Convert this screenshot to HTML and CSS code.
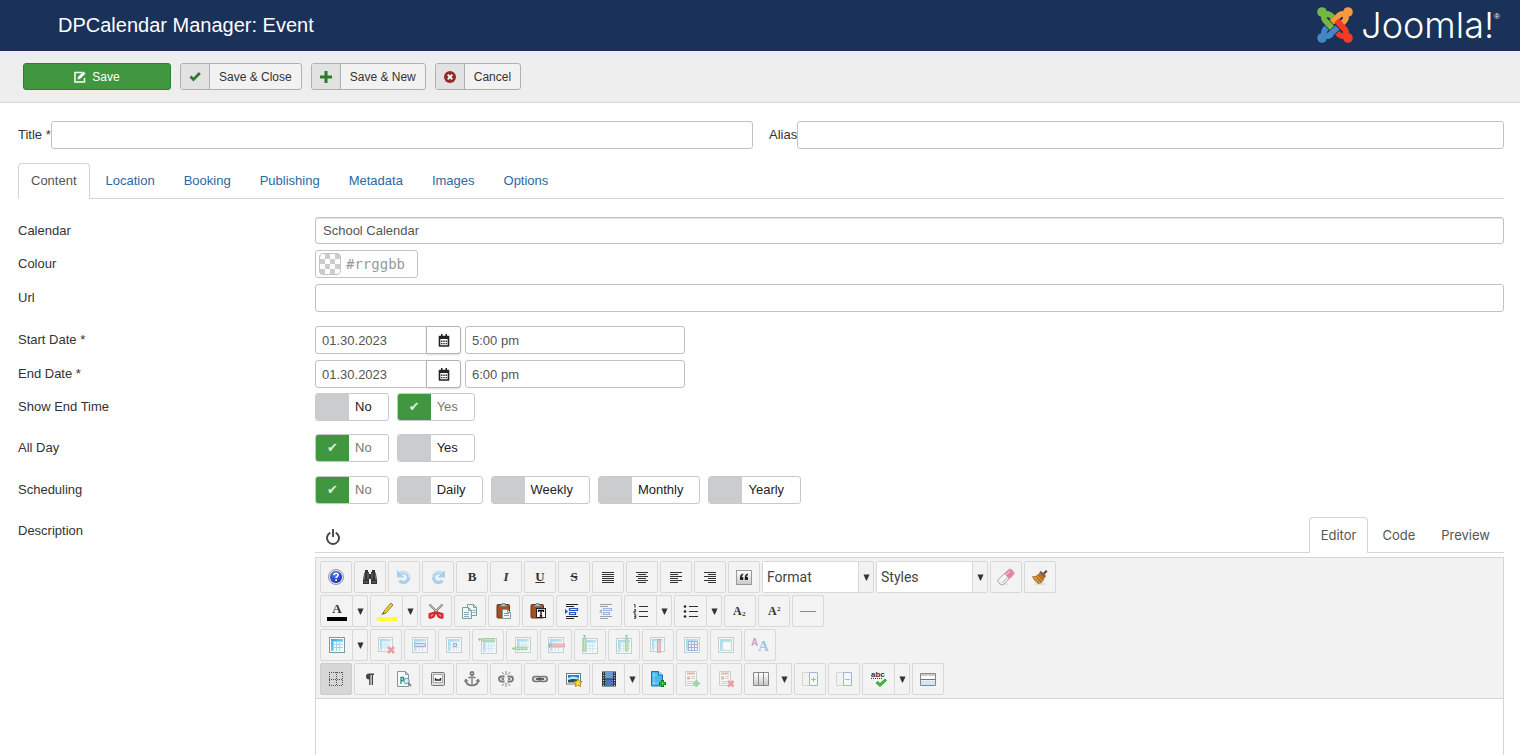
FILE: index.html
```html
<!DOCTYPE html>
<html lang="en">
<head>
<meta charset="utf-8">
<title>DPCalendar Manager: Event</title>
<link rel="stylesheet" href="styles.css">
</head>
<body>
<svg class="defs" aria-hidden="true">
  <defs>
    <linearGradient id="gblue" x1="0" y1="0" x2="1" y2="1"><stop offset="0" stop-color="#17b0ea"/><stop offset="1" stop-color="#b9e6f8"/></linearGradient>
    <linearGradient id="ggrey" x1="0" y1="0" x2="0" y2="1"><stop offset="0" stop-color="#fff"/><stop offset="1" stop-color="#c8c8c8"/></linearGradient>
    <radialGradient id="ghelp" cx=".4" cy=".3" r=".8"><stop offset="0" stop-color="#4f7cf0"/><stop offset="1" stop-color="#0a2bb0"/></radialGradient>
  </defs>
  <symbol id="table" viewBox="0 0 16 16"><rect x=".5" y=".5" width="15" height="15" fill="#fff" stroke="#7f9a9c"/><path d="M2 2h12v2.500H4.500V14H2z" fill="url(#gblue)"/><path d="M4.500 4.500H14V14H4.500z" fill="#f2fbfe"/><path d="M2 4.500h12M4.500 7.500H14M4.500 10.500H14M4.500 4.500V14M7.500 4.500V14M10.500 4.500V14" stroke="#8fcfe4" stroke-width=".8"/></symbol>
  <symbol id="caret" viewBox="0 0 8 8"><path d="M.5.500h7L4.400 7.500h-.8z" fill="#333"/></symbol>
  <symbol id="calendar" viewBox="0 0 12 13"><path d="M1.500 2.500h9v9.500h-9z" fill="#fff" stroke="#222" stroke-width="1.600" stroke-linejoin="round"/><path d="M1 2h10v3H1zM3 0h1.500v3H3zM7.500 0H9v3H7.500z" fill="#222"/><path d="M3 6.500h1.500V8H3zM5.300 6.500h1.500V8H5.300zM7.600 6.500h1.500V8H7.600zM3 9h1.500v1.200H3zM5.300 9h1.500v1.200H5.300zM7.600 9h1.500v1.200H7.600z" fill="#333"/></symbol>
  <symbol id="arm" viewBox="0 0 36 36"><path d="M16 10.500Q11.500 5 8.200 8.200Q5 11.500 10 15.500L16.500 22.500" fill="none" stroke="currentColor" stroke-width="5.800"/><circle cx="5" cy="5" r="4.800" fill="currentColor"/></symbol>
  <symbol id="gap" viewBox="0 0 36 36"><path d="M10 15.500L16.500 22.500" fill="none" stroke="#1a3159" stroke-width="7.200"/></symbol>
</svg>

<header class="header">
  <h1 class="header__title">DPCalendar Manager: Event</h1>
  <div class="logo">
    <svg class="logo__mark" viewBox="0 0 36 36" aria-hidden="true">
      <g color="#4586c5" transform="rotate(-90 18 18)"><use href="#arm"/></g>
      <g color="#f33a25" transform="rotate(180 18 18)"><use href="#gap"/><use href="#arm"/></g>
      <g color="#f89940" transform="rotate(90 18 18)"><use href="#gap"/><use href="#arm"/></g>
      <g color="#74b743"><use href="#gap"/><use href="#arm"/></g>
      <path d="M14 27L21.500 19.500" fill="none" stroke="#1a3159" stroke-width="7.200"/>
      <path d="M12.500 28L20.500 20.500" fill="none" stroke="#4586c5" stroke-width="5.800"/>
      <path d="M19.500 13.500L26.500 21" fill="none" stroke="#f33a25" stroke-width="5.800"/>
    </svg>
    <span class="logo__text">Joomla!</span><span class="logo__reg">®</span>
  </div>
</header>

<div class="actions">
  <button class="btn btn--save" type="button"><svg width="12" height="12" viewBox="0 0 12 12" aria-hidden="true"><path d="M8 1.500H1v9.500h9.500V7" fill="none" stroke="#fff" stroke-width="1.500"/><path d="M3.500 8.500L4 6 9.500.5l2 2L6 8z" fill="#fff"/></svg>Save</button>
  <button class="btn" type="button"><span class="btn__icon"><svg width="12" height="12" viewBox="0 0 12 12" aria-hidden="true"><path d="M.5 6.500L2.300 4.500 4.500 6.500 9.800 1 11.800 3 4.500 10.500z" fill="#2b7a2d"/></svg></span><span class="btn__text">Save &amp; Close</span></button>
  <button class="btn" type="button"><span class="btn__icon"><svg width="12" height="12" viewBox="0 0 12 12" aria-hidden="true"><path d="M4.500 0h3v4.500H12v3H7.500V12h-3V7.500H0v-3h4.500z" fill="#2b7a2d"/></svg></span><span class="btn__text">Save &amp; New</span></button>
  <button class="btn" type="button"><span class="btn__icon"><svg width="12" height="12" viewBox="0 0 12 12" aria-hidden="true"><circle cx="6" cy="6" r="6" fill="#942a25"/><path d="M3.700 3.700l4.600 4.600M8.300 3.700L3.700 8.300" stroke="#fff" stroke-width="1.900"/></svg></span><span class="btn__text">Cancel</span></button>
</div>

<main class="main">
  <div class="titles">
    <div class="titles__item"><label for="title">Title *</label><input class="field" id="title" type="text"></div>
    <div class="titles__item"><label for="alias">Alias</label><input class="field" id="alias" type="text"></div>
  </div>

  <nav class="tabs">
    <a class="tabs__link tabs__link--active" href="#content">Content</a>
    <a class="tabs__link" href="#location">Location</a>
    <a class="tabs__link" href="#booking">Booking</a>
    <a class="tabs__link" href="#publishing">Publishing</a>
    <a class="tabs__link" href="#metadata">Metadata</a>
    <a class="tabs__link" href="#images">Images</a>
    <a class="tabs__link" href="#options">Options</a>
  </nav>

  <div class="row"><label class="row__label" for="calendar-sel">Calendar</label><select class="field field--select" id="calendar-sel"><option>School Calendar</option></select></div>
  <div class="row"><label class="row__label" for="colour">Colour</label><div class="colour"><span class="colour__swatch"></span><input class="colour__input" id="colour" type="text" placeholder="#rrggbb"></div></div>
  <div class="row row--url"><label class="row__label" for="url">Url</label><input class="field" id="url" type="text"></div>
  <div class="row"><label class="row__label" for="start">Start Date *</label><div class="when"><div class="date"><input class="field date__input" id="start" type="text" value="01.30.2023"><button class="date__btn" type="button" aria-label="Pick start date"><svg width="12" height="13"><use href="#calendar"/></svg></button></div><input class="field when__time" type="text" value="5:00 pm" aria-label="Start time"></div></div>
  <div class="row row--end"><label class="row__label" for="end">End Date *</label><div class="when"><div class="date"><input class="field date__input" id="end" type="text" value="01.30.2023"><button class="date__btn" type="button" aria-label="Pick end date"><svg width="12" height="13"><use href="#calendar"/></svg></button></div><input class="field when__time" type="text" value="6:00 pm" aria-label="End time"></div></div>
  <div class="row row--loose"><span class="row__label">Show End Time</span><div class="toggles">
    <label class="toggle"><input type="radio" name="showend"><span>No</span></label>
    <label class="toggle"><input type="radio" name="showend" checked><span>Yes</span></label></div></div>
  <div class="row row--url"><span class="row__label">All Day</span><div class="toggles">
    <label class="toggle"><input type="radio" name="allday" checked><span>No</span></label>
    <label class="toggle"><input type="radio" name="allday"><span>Yes</span></label></div></div>
  <div class="row row--loose"><span class="row__label">Scheduling</span><div class="toggles">
    <label class="toggle"><input type="radio" name="sched" checked><span>No</span></label>
    <label class="toggle"><input type="radio" name="sched"><span>Daily</span></label>
    <label class="toggle"><input type="radio" name="sched"><span>Weekly</span></label>
    <label class="toggle"><input type="radio" name="sched"><span>Monthly</span></label>
    <label class="toggle"><input type="radio" name="sched"><span>Yearly</span></label></div></div>

  <div class="row row--editor"><span class="row__label">Description</span>
    <div class="editor">
      <div class="editor__head">
        <button class="power" type="button" aria-label="Toggle editor"><svg width="14" height="16" viewBox="0 0 14 16"><path d="M4.300 3.600a6 6 0 1 0 5.400 0" fill="none" stroke="#444" stroke-width="1.900"/><path d="M7 0v8" stroke="#444" stroke-width="1.900"/></svg></button>
        <nav class="modes"><a class="modes__link modes__link--active" href="#editor">Editor</a><a class="modes__link" href="#code">Code</a><a class="modes__link" href="#preview">Preview</a></nav>
      </div>
      <div class="editor__box">
        <div class="bars">
          <div class="bar">
            <button class="tool" type="button" aria-label="Help"><svg viewBox="0 0 16 16"><circle cx="8" cy="8" r="7.500" fill="#e4e4e4" stroke="#999"/><circle cx="8" cy="8" r="6" fill="url(#ghelp)"/><path d="M5.900 6.200q.2-2 2.200-2 2 0 2 1.800 0 1-1.100 1.700-.9.500-.9 1.300M8.100 10.300v1.700" fill="none" stroke="#fff" stroke-width="1.600"/></svg></button>
            <button class="tool" type="button" aria-label="Find"><svg viewBox="0 0 16 16"><path d="M3 1h3v2h1v2h2V3h1V1h3v2l1 2 1 6v4H9v-5H7v5H1v-4l1-6 1-2z" fill="#333"/><path d="M3 5l-1 6M6 4v6M10 4v6M13 5l1 6M2 13h4M10 13h4" stroke="#888" stroke-width=".8"/></svg></button>
            <button class="tool tool--off" type="button" aria-label="Undo"><svg viewBox="0 0 16 16"><path d="M3.500 5.500A5 5 0 1 1 3.500 11.500" fill="none" stroke="#3b9ae0" stroke-width="3.400"/><path d="M1 1v7.500h7.500z" fill="#3b9ae0"/><path d="M4.500 4.500A5 5 0 0 1 13 8.500" fill="none" stroke="#bfe2fb" stroke-width="1.200"/></svg></button>
            <button class="tool tool--off" type="button" aria-label="Redo"><svg viewBox="0 0 16 16"><path d="M12.500 5.500A5 5 0 1 0 12.500 11.500" fill="none" stroke="#3b9ae0" stroke-width="3.400"/><path d="M15 1v7.500H7.500z" fill="#3b9ae0"/><path d="M11.500 4.500A5 5 0 0 0 3 8.500" fill="none" stroke="#bfe2fb" stroke-width="1.200"/></svg></button>
            <button class="tool tool--text" type="button"><b>B</b></button>
            <button class="tool tool--text" type="button"><i>I</i></button>
            <button class="tool tool--text" type="button"><u>U</u></button>
            <button class="tool tool--text" type="button"><s>S</s></button>
            <button class="tool" type="button" aria-label="Justify"><svg viewBox="0 0 16 16"><path d="M2 3.500h12M2 5.500h12M2 7.500h12M2 9.500h12M2 11.500h12M2 13.500h12" stroke="#333"/></svg></button>
            <button class="tool" type="button" aria-label="Align center"><svg viewBox="0 0 16 16"><path d="M2 3.500h12M4 5.500h8M2 7.500h12M4 9.500h8M2 11.500h12M4 13.500h8" stroke="#333"/></svg></button>
            <button class="tool" type="button" aria-label="Align left"><svg viewBox="0 0 16 16"><path d="M2 3.500h12M2 5.500h8M2 7.500h12M2 9.500h8M2 11.500h12M2 13.500h8" stroke="#333"/></svg></button>
            <button class="tool" type="button" aria-label="Align right"><svg viewBox="0 0 16 16"><path d="M2 3.500h12M6 5.500h8M2 7.500h12M6 9.500h8M2 11.500h12M6 13.500h8" stroke="#333"/></svg></button>
            <button class="tool" type="button" aria-label="Quote"><svg viewBox="0 0 16 16"><rect x=".5" y="1.500" width="15" height="14" fill="url(#ggrey)" stroke="#999"/><path d="M7.200 4.500Q4 5 4 8.500V11h3.200V8H5.700Q5.700 6.300 7.200 6zM12 4.500Q8.800 5 8.800 8.500V11H12V8h-1.500q0-1.700 1.500-2z" fill="#222"/></svg></button>
            <div class="combo"><select aria-label="Format"><option>Format</option></select><span class="combo__arrow"><svg class="caret"><use href="#caret"/></svg></span></div>
            <div class="combo"><select aria-label="Styles"><option>Styles</option></select><span class="combo__arrow"><svg class="caret"><use href="#caret"/></svg></span></div>
            <button class="tool" type="button" aria-label="Remove formatting"><svg viewBox="0 0 16 16"><path d="M1 15h9" stroke="#ccc"/><g transform="rotate(-43 8 8)"><rect x="-1" y="4.500" width="18" height="7" rx="2" fill="#f4f4f4" stroke="#888" stroke-width=".7"/><path d="M9 4.700h5.500q2.200 0 2.200 2v2.500q0 2.100-2.200 2.100H9z" fill="#e8839a"/><path d="M9 6.500h6" stroke="#f9c6d0"/><path d="M1 9.500h8" stroke="#c4c4c4"/></g></svg></button>
            <button class="tool" type="button" aria-label="Clean up"><svg viewBox="0 0 16 16"><path d="M3 15h10" stroke="#ccc"/><path d="M11 4l3-3 1.500 1.500-3 3z" fill="#7b3b20"/><path d="M0 7q5 1 8-4l5 5q-2 6-6 7-5-2-7-8z" fill="#b97428"/><path d="M7.500 3l1.500-1 5 5-1 1.500z" fill="#557"/><path d="M3 8l5 6M5 7l5 5M2 8l3 5" stroke="#eeb45e" stroke-width=".8"/></svg></button>
          </div>
          <div class="bar">
            <div class="split"><button class="tool" type="button" aria-label="Text colour"><svg class="wide" viewBox="0 0 20 20"><text x="10" y="12" text-anchor="middle" class="glyph">A</text><path d="M0 16h20v4H0z" fill="#000"/></svg></button><button class="drop" type="button" aria-label="Text colours"><svg class="caret"><use href="#caret"/></svg></button></div>
            <div class="split"><button class="tool" type="button" aria-label="Highlight"><svg class="wide" viewBox="0 0 20 20"><path d="M14 2l2 2-7 8-3 1 1-3z" fill="#f2cf23" stroke="#6a5d16" stroke-width=".7"/><path d="M4 14l4-1.500-1.500-1.500z" fill="#555"/><path d="M0 16h20v4H0z" fill="#ff3"/></svg></button><button class="drop" type="button" aria-label="Highlight colours"><svg class="caret"><use href="#caret"/></svg></button></div>
            <button class="tool" type="button" aria-label="Cut"><svg viewBox="0 0 16 16"><path d="M1.500 1.500L11 11M14.500 1.500L5 11" stroke="#777" stroke-width="2"/><path d="M1.500 1.500L10 10M14.500 1.500L6 10" stroke="#ddd" stroke-width=".8"/><path d="M7 9.500L1.500 11v3.500q4 1 5.500-4zM9 9.500l5.500 1.500v3.500q-4 1-5.500-4z" fill="#ee8080" stroke="#d3262c" stroke-width="2"/></svg></button>
            <button class="tool" type="button" aria-label="Copy"><svg viewBox="0 0 16 16"><g fill="#eef6f5" stroke="#7b9c9a"><path d="M5.500 1.500h6l3 3v8h-9z"/><path d="M.5 4.500h6l3 3v8h-9z"/></g><path d="M6.500 4.500v3h3M11.500 1.500v3h3" fill="none" stroke="#7b9c9a"/><path d="M2 9.500h5M2 11.500h5M2 13.500h5M10.500 7.500h3M10.500 9.500h3" stroke="#8ab"/></svg></button>
            <button class="tool" type="button" aria-label="Paste"><svg viewBox="0 0 16 16"><rect x="1" y="1.500" width="12.500" height="13.500" rx="1" fill="#a55222" stroke="#6c3213"/><path d="M4 3.500V2h2V.5h3V2h2v1.500z" fill="#bbb" stroke="#666" stroke-width=".6"/><path d="M6.500 6.500h5l3 3v6h-8z" fill="#f2f8f7" stroke="#7b9c9a"/><path d="M8 10.500h5M8 12.500h5M11.500 6.500v3h3" stroke="#7b9fa0" fill="none"/></svg></button>
            <button class="tool" type="button" aria-label="Paste as text"><svg viewBox="0 0 16 16"><rect x="1" y="1.500" width="12.500" height="13.500" rx="1" fill="#a55222" stroke="#6c3213"/><path d="M4 3.500V2h2V.5h3V2h2v1.500z" fill="#bbb" stroke="#666" stroke-width=".6"/><rect x="6.500" y="5.500" width="9" height="9" fill="#fff" stroke="#222"/><path d="M8.500 9V7.500h5V9M11 7.500v6M9.800 13h2.400" fill="none" stroke="#000" stroke-width="1.300"/></svg></button>
            <button class="tool" type="button" aria-label="Indent"><svg viewBox="0 0 16 16"><path d="M2 1.500h12M2 3.500h8M2 13.500h12M2 15.500h8" stroke="#222"/><path d="M5.500 5.500h8v2h-8zM5.500 9.500h6v2h-6z" fill="#dfe9ff" stroke="#2352c9" stroke-width="1.200"/><path d="M1 6v5l3-2.500z" fill="#2352c9"/></svg></button>
            <button class="tool tool--off" type="button" aria-label="Outdent"><svg viewBox="0 0 16 16"><path d="M2 1.500h12M2 3.500h8M2 13.500h12M2 15.500h8" stroke="#222"/><path d="M5.500 5.500h8v2h-8zM5.500 9.500h6v2h-6z" fill="#dfe9ff" stroke="#2352c9" stroke-width="1.200"/><path d="M4 6v5L1 8.500z" fill="#2352c9"/></svg></button>
            <div class="split"><button class="tool" type="button" aria-label="Numbered list"><svg viewBox="0 0 16 16"><path d="M6 3.500h9M6 8.500h9M6 13.500h9" stroke="#333"/><path d="M1 2l1-.7v3.400M1 6.700h1.600v1.600H1V10h2M1 11.700h1.700v3.600H1M1.200 13.500h1.500" fill="none" stroke="#222" stroke-width=".9"/></svg></button><button class="drop" type="button" aria-label="Numbered list styles"><svg class="caret"><use href="#caret"/></svg></button></div>
            <div class="split"><button class="tool" type="button" aria-label="Bullet list"><svg viewBox="0 0 16 16"><path d="M6 3.500h9M6 8.500h9M6 13.500h9" stroke="#333"/><g fill="#222"><circle cx="2" cy="3.500" r="1.300"/><circle cx="2" cy="8.500" r="1.300"/><circle cx="2" cy="13.500" r="1.300"/></g></svg></button><button class="drop" type="button" aria-label="Bullet list styles"><svg class="caret"><use href="#caret"/></svg></button></div>
            <button class="tool" type="button" aria-label="Subscript"><svg viewBox="0 0 16 16"><text x="1" y="12" class="glyph glyph--s">A</text><text x="10" y="13" class="glyph glyph--xs">2</text></svg></button>
            <button class="tool" type="button" aria-label="Superscript"><svg viewBox="0 0 16 16"><text x="2" y="12" class="glyph glyph--s">A</text><text x="11" y="8" class="glyph glyph--xs">2</text></svg></button>
            <button class="tool" type="button" aria-label="Horizontal rule"><svg viewBox="0 0 16 16"><path d="M0 8.500h16" stroke="#888"/></svg></button>
          </div>
          <div class="bar">
            <div class="split"><button class="tool" type="button" aria-label="Insert table"><svg viewBox="0 0 16 16"><use href="#table"/></svg></button><button class="drop" type="button" aria-label="Table size"><svg class="caret"><use href="#caret"/></svg></button></div>
            <button class="tool tool--off" type="button" aria-label="Delete table"><svg viewBox="0 0 16 16"><use href="#table" width="15" height="15"/><path d="M10 10l6 6M16 10L10 16" stroke="#d3232a" stroke-width="2.600"/></svg></button>
            <button class="tool tool--off" type="button" aria-label="Row properties"><svg viewBox="0 0 16 16"><use href="#table"/><path d="M2.500 6.500h11v3h-11z" fill="#bcd" stroke="#2d49b9"/></svg></button>
            <button class="tool tool--off" type="button" aria-label="Cell properties"><svg viewBox="0 0 16 16"><use href="#table"/><path d="M7.500 6.500h3v3h-3z" fill="#bcd" stroke="#2d49b9"/></svg></button>
            <button class="tool tool--off" type="button" aria-label="Insert row before"><svg class="wide" viewBox="0 0 20 20"><use href="#table" x="3" y="3" width="16" height="16"/><path d="M0 4.500h4M1.500 3v3" stroke="#278b2b"/><rect x="4" y="3.500" width="12" height="2.500" fill="#70d567" stroke="#278b2b" stroke-width=".8"/></svg></button>
            <button class="tool tool--off" type="button" aria-label="Insert row after"><svg class="wide" viewBox="0 0 20 20"><use href="#table" x="3" y="2" width="16" height="16"/><path d="M0 13.500h4M1.500 12v3" stroke="#278b2b"/><rect x="3" y="12" width="12" height="2.500" fill="#70d567" stroke="#278b2b" stroke-width=".8"/></svg></button>
            <button class="tool tool--off" type="button" aria-label="Delete row"><svg viewBox="0 0 16 16"><use href="#table"/><path d="M1.500 6v5M0 8.500h3" stroke="#b51f1f"/><rect x="3.500" y="7" width="13" height="2.800" fill="#ef7d7d" stroke="#b51f1f" stroke-width=".8"/></svg></button>
            <button class="tool tool--off" type="button" aria-label="Insert column before"><svg class="wide" viewBox="0 0 20 20"><use href="#table" x="2" y="3" width="16" height="16"/><path d="M3 .5h3M4.500 0v4" stroke="#278b2b"/><rect x="3.500" y="3" width="2.500" height="13" fill="#70d567" stroke="#278b2b" stroke-width=".8"/></svg></button>
            <button class="tool tool--off" type="button" aria-label="Insert column after"><svg class="wide" viewBox="0 0 20 20"><use href="#table" x="2" y="3" width="16" height="16"/><path d="M11 .5h3M12.500 0v4" stroke="#278b2b"/><rect x="11.500" y="3" width="2.500" height="13" fill="#70d567" stroke="#278b2b" stroke-width=".8"/></svg></button>
            <button class="tool tool--off" type="button" aria-label="Delete column"><svg viewBox="0 0 16 16"><use href="#table" width="15" height="15"/><path d="M7 2.500h4M9 2v3" stroke="#b51f1f"/><rect x="7.500" y="4.500" width="2.800" height="11" fill="#ef7d7d" stroke="#b51f1f" stroke-width=".8"/></svg></button>
            <button class="tool tool--off" type="button" aria-label="Split cells"><svg viewBox="0 0 16 16"><use href="#table"/><path d="M4.500 4.500h9v9h-9zM4.500 7.500h9M4.500 10.500h9M7.500 4.500v9M10.500 4.500v9" fill="none" stroke="#2d49b9"/></svg></button>
            <button class="tool tool--off" type="button" aria-label="Merge cells"><svg viewBox="0 0 16 16"><use href="#table"/><path d="M4.500 4.500h9v9h-9z" fill="#fff" stroke="#9ab0b3"/></svg></button>
            <button class="tool tool--off" type="button" aria-label="Styles"><svg viewBox="0 0 16 16"><text x="-1" y="9" class="glyph glyph--sans">A</text><text x="6" y="14" class="glyph glyph--blue">A</text></svg></button>
          </div>
          <div class="bar">
            <button class="tool tool--on" type="button" aria-label="Guidelines"><svg viewBox="0 0 16 16"><path d="M1 1.500h14M1 14.500h14M1 8.500h14M1.500 1v14M14.500 1v14M8.500 1v14" fill="none" stroke="#555" stroke-dasharray="1 1"/></svg></button>
            <button class="tool" type="button" aria-label="Show blocks"><svg viewBox="0 0 16 16"><path d="M6 2.500h6V4h-1v10H9.700V4H8.500v10H7.200V8.500Q4 8.500 4 5.500T7 2.500z" fill="#444"/></svg></button>
            <button class="tool" type="button" aria-label="Preview"><svg viewBox="0 0 16 16"><path d="M1.500.5h8l3 3v12h-11z" fill="#f4fafa" stroke="#7b9c9a"/><path d="M9.500.5v3h3" fill="none" stroke="#7b9c9a"/><path d="M5 13V6.500h2.500v3H5" fill="none" stroke="#25917e" stroke-width="1.300"/><circle cx="10.500" cy="10" r="2.700" fill="#d7effc" stroke="#6b8fae"/><path d="M12.500 12l2.500 3" stroke="#777" stroke-width="1.600"/></svg></button>
            <button class="tool" type="button" aria-label="Non-breaking space"><svg viewBox="0 0 16 16"><rect x="1.500" y="1.500" width="13" height="13" rx="1" fill="#ddd" stroke="#777"/><rect x="3.500" y="3.500" width="9" height="8" fill="#fafafa" stroke="#aaa"/><path d="M5.500 7v2h5V7" fill="none" stroke="#222" stroke-width="1.300"/></svg></button>
            <button class="tool" type="button" aria-label="Anchor"><svg viewBox="0 0 16 16"><g fill="none" stroke="#777" stroke-width="1.700"><circle cx="8" cy="2.500" r="1.600"/><path d="M8 4v11M4.500 6.500h7M1.500 9q1 5.500 6.500 5.500T14.500 9"/></g><path d="M0 11l1.500-3.500L4.500 10zM16 11l-1.500-3.500-3 2.500z" fill="#777"/><path d="M8 5v9" stroke="#ddd" stroke-width=".6"/></svg></button>
            <button class="tool" type="button" aria-label="Unlink"><svg viewBox="0 0 16 16"><g fill="none" stroke="#777" stroke-width="1.800"><path d="M6.500 5.500h-3a2.500 2.500 0 0 0 0 5h3M9.500 5.500h3a2.500 2.500 0 0 1 0 5h-3"/></g><path d="M3.500 8H6M10 8h2.500" stroke="#666" stroke-width="1.500"/><path d="M8 0v4M4 1l2 2.500M12 1l-2 2.500M8 12v4M4 15l2-2.500M12 15l-2-2.500" stroke="#888"/></svg></button>
            <button class="tool" type="button" aria-label="Link"><svg viewBox="0 0 16 16"><g fill="#ddd" stroke="#777" stroke-width="1.600"><rect x=".8" y="5.500" width="8" height="5" rx="2.500"/><rect x="7.200" y="5.500" width="8" height="5" rx="2.500"/></g><path d="M4 8h8" stroke="#555" stroke-width="1.800"/></svg></button>
            <button class="tool" type="button" aria-label="Image"><svg viewBox="0 0 16 16"><rect x=".5" y="2.500" width="14" height="10.500" fill="#fff" stroke="#777"/><path d="M2 4h11v4H2z" fill="#1686d4"/><path d="M2 7q5-3 11 0v2H2z" fill="#bde7fa"/><path d="M2 9q5-2 11 0v2.500H2z" fill="#22505e"/><path d="M12 7.500l1.300 2.700 3 .4-2.200 2 .6 3L12 14.200l-2.700 1.400.6-3-2.200-2 3-.4z" fill="#fbdb35" stroke="#9a7a10" stroke-width=".7"/></svg></button>
            <div class="split"><button class="tool" type="button" aria-label="Media"><svg viewBox="0 0 16 16"><path d="M1 .500h14v15H1z" fill="#2b3033"/><path d="M4 1h8v6.500H4z" fill="#6d9ad6"/><path d="M4 8.500h8V15H4z" fill="#4773b7"/><path d="M2.500 1.500v14M13.500 1.500v14" stroke="#ddd" stroke-width="1.200" stroke-dasharray="1 1.500"/></svg></button><button class="drop" type="button" aria-label="Media types"><svg class="caret"><use href="#caret"/></svg></button></div>
            <button class="tool" type="button" aria-label="Template"><svg viewBox="0 0 16 16"><path d="M1.500.5h7l4 3.500v11h-11z" fill="#48b5ed" stroke="#1473ad"/><path d="M8.500.5V4h4" fill="#c4ebfd" stroke="#1473ad"/><path d="M4 2v12M2 4h5M2 12h9" stroke="#a6dff9" stroke-width=".7"/><path d="M12.500 9v7M9 12.500h7" stroke="#087c13" stroke-width="3"/><path d="M12.500 10v5M10 12.500h5" stroke="#35d235" stroke-width="1.300"/></svg></button>
            <button class="tool tool--off" type="button" aria-label="Insert article"><svg viewBox="0 0 16 16"><path d="M1.500.5h11v14h-11z" fill="#fff" stroke="#999"/><path d="M3 2.500h8" stroke="#b66c2d" stroke-width="2"/><path d="M3 5.500h3v3H3z" fill="#b66c2d"/><path d="M7 5.500h4M7 7.500h4M3 10.500h8M3 12.500h6" stroke="#999"/><path d="M12.500 9v7M9 12.500h7" stroke="#21a52b" stroke-width="2.500"/></svg></button>
            <button class="tool tool--off" type="button" aria-label="Remove article"><svg viewBox="0 0 16 16"><path d="M1.500.5h11v14h-11z" fill="#fff" stroke="#999"/><path d="M3 2.500h8" stroke="#b66c2d" stroke-width="2"/><path d="M3 5.500h3v3H3z" fill="#b66c2d"/><path d="M7 5.500h4M7 7.500h4M3 10.500h8M3 12.500h6" stroke="#999"/><path d="M10 10l5.500 5.500M15.500 10L10 15.500" stroke="#d3232a" stroke-width="2.500"/></svg></button>
            <div class="split"><button class="tool" type="button" aria-label="Columns"><svg viewBox="0 0 16 16"><path d="M.5 1.500h15v13H.5zM5.500 1.500v13M10.500 1.500v13" fill="url(#ggrey)" stroke="#888"/></svg></button><button class="drop" type="button" aria-label="Column layouts"><svg class="caret"><use href="#caret"/></svg></button></div>
            <button class="tool tool--off" type="button" aria-label="Add column"><svg viewBox="0 0 16 16"><path d="M.5 1.500h7v13h-7z" fill="#f2f2f2" stroke="#aaa"/><path d="M7.500 1.500h8v13h-8zM9 8.500h5M11.500 6v5" fill="#fff" stroke="#2d52c9"/></svg></button>
            <button class="tool tool--off" type="button" aria-label="Remove column"><svg viewBox="0 0 16 16"><path d="M.5 1.500h7v13h-7z" fill="#f2f2f2" stroke="#aaa"/><path d="M7.500 1.500h8v13h-8zM9 8.500h5" fill="#fff" stroke="#2d52c9"/></svg></button>
            <div class="split"><button class="tool" type="button" aria-label="Spell check"><svg viewBox="0 0 16 16"><text x="0" y="6" class="glyph glyph--abc">abc</text><path d="M0 7.500h11" stroke="#333" stroke-dasharray="1 1"/><path d="M5 12l2-1.500L9 12.500 14 8l1.500 1.500L9 15.500z" fill="#38c82e" stroke="#1a7d18" stroke-width=".7"/></svg></button><button class="drop" type="button" aria-label="Spell check languages"><svg class="caret"><use href="#caret"/></svg></button></div>
            <button class="tool" type="button" aria-label="Read more"><svg viewBox="0 0 16 16"><path d="M.5 2.500h15v12H.5z" fill="#fff" stroke="#888"/><path d="M1 3h14v2H1z" fill="#ccc"/><path d="M1 9.500h14V14H1z" fill="#cde6f8"/><path d="M0 8.500h16" stroke="#777"/></svg></button>
          </div>
        </div>
      </div>
    </div>
  </div>
</main>
</body>
</html>
```
FILE: styles.css
```css
* { box-sizing: border-box; }
html, body { margin: 0; height: 100%; }
body {
  display: flex;
  flex-direction: column;
  font: 13px/18px "Liberation Sans", Arial, sans-serif;
  color: #333;
  background: #fff;
}
button, input, select { font: inherit; color: inherit; margin: 0; }
button { padding: 0; cursor: pointer; }
svg { display: block; flex: none; }
a { text-decoration: none; }
.defs { position: absolute; width: 0; height: 0; }

.header {
  display: flex;
  align-items: center;
  justify-content: space-between;
  padding: 7px 20px 8px 58px;
  background: #1a3159;
  color: #fff;
}
.header__title { margin: 0; font-size: 20px; line-height: 24px; font-weight: 400; }
.logo { display: flex; align-items: center; }
.logo__mark { width: 36px; height: 36px; margin-right: 8px; }
.logo__text { font: 300 36px/36px Inter, sans-serif; }
.logo__reg { align-self: flex-start; font-size: 8px; line-height: 20px; }

.actions {
  display: flex;
  gap: 9px;
  padding: 12px 23px;
  background: #eee;
  border-bottom: 1px solid #d8d8d8;
}
.btn {
  display: flex;
  align-items: stretch;
  height: 27px;
  border: 1px solid #b0b0b0;
  border-radius: 3px;
  background: #f2f2f2;
  font-size: 12px;
  line-height: 26px;
  overflow: hidden;
}
.btn--save {
  width: 148px;
  align-items: center;
  justify-content: center;
  gap: 6px;
  background: #409740;
  border-color: #2f7d32;
  color: #fff;
}
.btn__icon {
  display: flex;
  align-items: center;
  justify-content: center;
  width: 29px;
  background: #e2e2e2;
  border-right: 1px solid #b0b0b0;
}
.btn__text { padding: 0 9px; }

.main {
  flex: 1;
  display: flex;
  flex-direction: column;
  padding: 18px 16px 0 18px;
}
.titles { display: grid; grid-template-columns: 1fr 1fr; gap: 16px; }
.titles__item { display: flex; align-items: center; white-space: nowrap; }
.titles__item .field { flex: 1; }
.field {
  width: 100%;
  min-width: 0;
  height: 28px;
  padding: 0 6px;
  border: 1px solid #c2c2c2;
  border-radius: 3px;
  background: #fff;
  color: #555;
}
.field--select { height: 27px; padding: 0 7px; appearance: none; box-shadow: inset 0 1px 1px #e4e4e4; }

.tabs { display: flex; gap: 3px; margin: 14px 0 18px; border-bottom: 1px solid #d5d5d5; }
.tabs__link { padding: 8px 12px; border: 1px solid transparent; border-bottom: 0; line-height: 18px; color: #2a69a6; }
.tabs__link--active {
  margin-bottom: -1px;
  border-color: #d5d5d5;
  border-radius: 4px 4px 0 0;
  background: #fff;
  color: #555;
}

.row { display: grid; grid-template-columns: 297px minmax(0, 1fr); align-items: start; margin-bottom: 6px; }
.row--end { margin-bottom: 5px; }
.row--loose { margin-bottom: 13px; }
.row--url { margin-bottom: 14px; }
.row--editor { flex: 1; margin: 0; align-items: stretch; }
.row__label { line-height: 27px; }

.colour {
  display: flex;
  align-items: center;
  gap: 5px;
  width: 103px;
  height: 28px;
  padding: 0 3px;
  border: 1px solid #c2c2c2;
  border-radius: 3px;
}
.colour__swatch {
  width: 22px;
  height: 22px;
  flex: none;
  border: 1px solid #c4c4c4;
  border-radius: 4px;
  background: repeating-conic-gradient(#ccc 0 25%, #fff 0 50%) 0 0 / 10px 10px;
}
.colour__input { width: 68px; border: 0; padding: 0; background: none; font: 14px/20px "DejaVu Sans Mono", monospace; }
.colour__input::placeholder { color: #999; opacity: 1; }

.when { display: flex; gap: 4px; }
.when__time { width: 220px; }
.date { display: flex; }
.date__input { width: 112px; border-radius: 3px 0 0 3px; }
.date__btn {
  display: flex;
  align-items: center;
  justify-content: center;
  width: 35px;
  margin-left: -1px;
  border: 1px solid #b3b3b3;
  border-radius: 0 3px 3px 0;
  background: #fff;
  box-shadow: 0 1px 2px #ddd;
}

.toggles { display: flex; gap: 8px; }
.toggle {
  display: flex;
  height: 28px;
  border: 1px solid #c8c9cb;
  border-radius: 3px;
  overflow: hidden;
  line-height: 26px;
  color: #222;
}
.toggle input {
  appearance: none;
  width: 33px;
  background: #cbccce;
  color: #d7f2d4;
  text-align: center;
  font-family: "DejaVu Sans", sans-serif;
}
.toggle input:checked { background: #409740; }
.toggle input:checked::before { content: "✔"; }
.toggle input:checked + span { color: #777; }
.toggle span { padding: 0 16px 0 6px; }

.editor { display: flex; flex-direction: column; }
.editor__head { display: flex; align-items: flex-start; justify-content: space-between; border-bottom: 1px solid #d5d5d5; }
.power { margin: 12px 11px 0; border: 0; background: none; }
.modes { display: flex; gap: 2px; padding-right: 2px; }
.modes__link { padding: 8px 11px; border: 1px solid transparent; border-bottom: 0; font-family: Inter, sans-serif; color: #555; }
.modes__link--active { margin-bottom: -1px; border-color: #d5d5d5; border-radius: 4px 4px 0 0; background: #fff; }
.editor__box { flex: 1; margin-top: 4px; border: 1px solid #d5d5d5; border-bottom: 0; }
.bars { display: flex; flex-direction: column; gap: 2px; padding: 3px 4px; background: #f2f2f2; border-bottom: 1px solid #d5d5d5; }
.bar { display: flex; flex-wrap: wrap; gap: 2px; }
.tool, .drop {
  display: flex;
  align-items: center;
  justify-content: center;
  width: 32px;
  height: 32px;
  border: 1px solid #d8d8d8;
  border-radius: 2px;
  background: #f3f3f3;
}
.tool svg { width: 16px; height: 16px; overflow: visible; }
.tool svg.wide { width: 20px; height: 20px; }
.tool--off svg { opacity: .4; }
.tool--on { background: #d6d6d6; border-color: #ccc; }
.tool--text { font: 700 13px/16px "Liberation Serif", serif; color: #333; }
.split { display: flex; }
.split .tool { width: 33px; }
.drop { width: 16px; margin-left: -1px; }
.caret { width: 7px; height: 7px; }
.combo { display: flex; width: 112px; height: 32px; border: 1px solid #d8d8d8; border-radius: 2px; }
.combo select { flex: 1; min-width: 0; padding: 0 4px; border: 0; appearance: none; background: #fff; font: 14px/20px Roboto, sans-serif; color: #444; }
.combo__arrow { display: flex; align-items: center; justify-content: center; width: 15px; border-left: 1px solid #d8d8d8; }
.glyph { font: 700 13px "Liberation Serif", serif; fill: #333; }
.glyph--s { font-size: 12px; }
.glyph--xs { font-size: 7px; }
.glyph--sans { font: 700 10px "Liberation Sans", sans-serif; fill: #8b2a8c; }
.glyph--blue { font-size: 15px; fill: #2f7fd0; }
.glyph--abc { font: 700 8px "Liberation Sans", sans-serif; }
```
